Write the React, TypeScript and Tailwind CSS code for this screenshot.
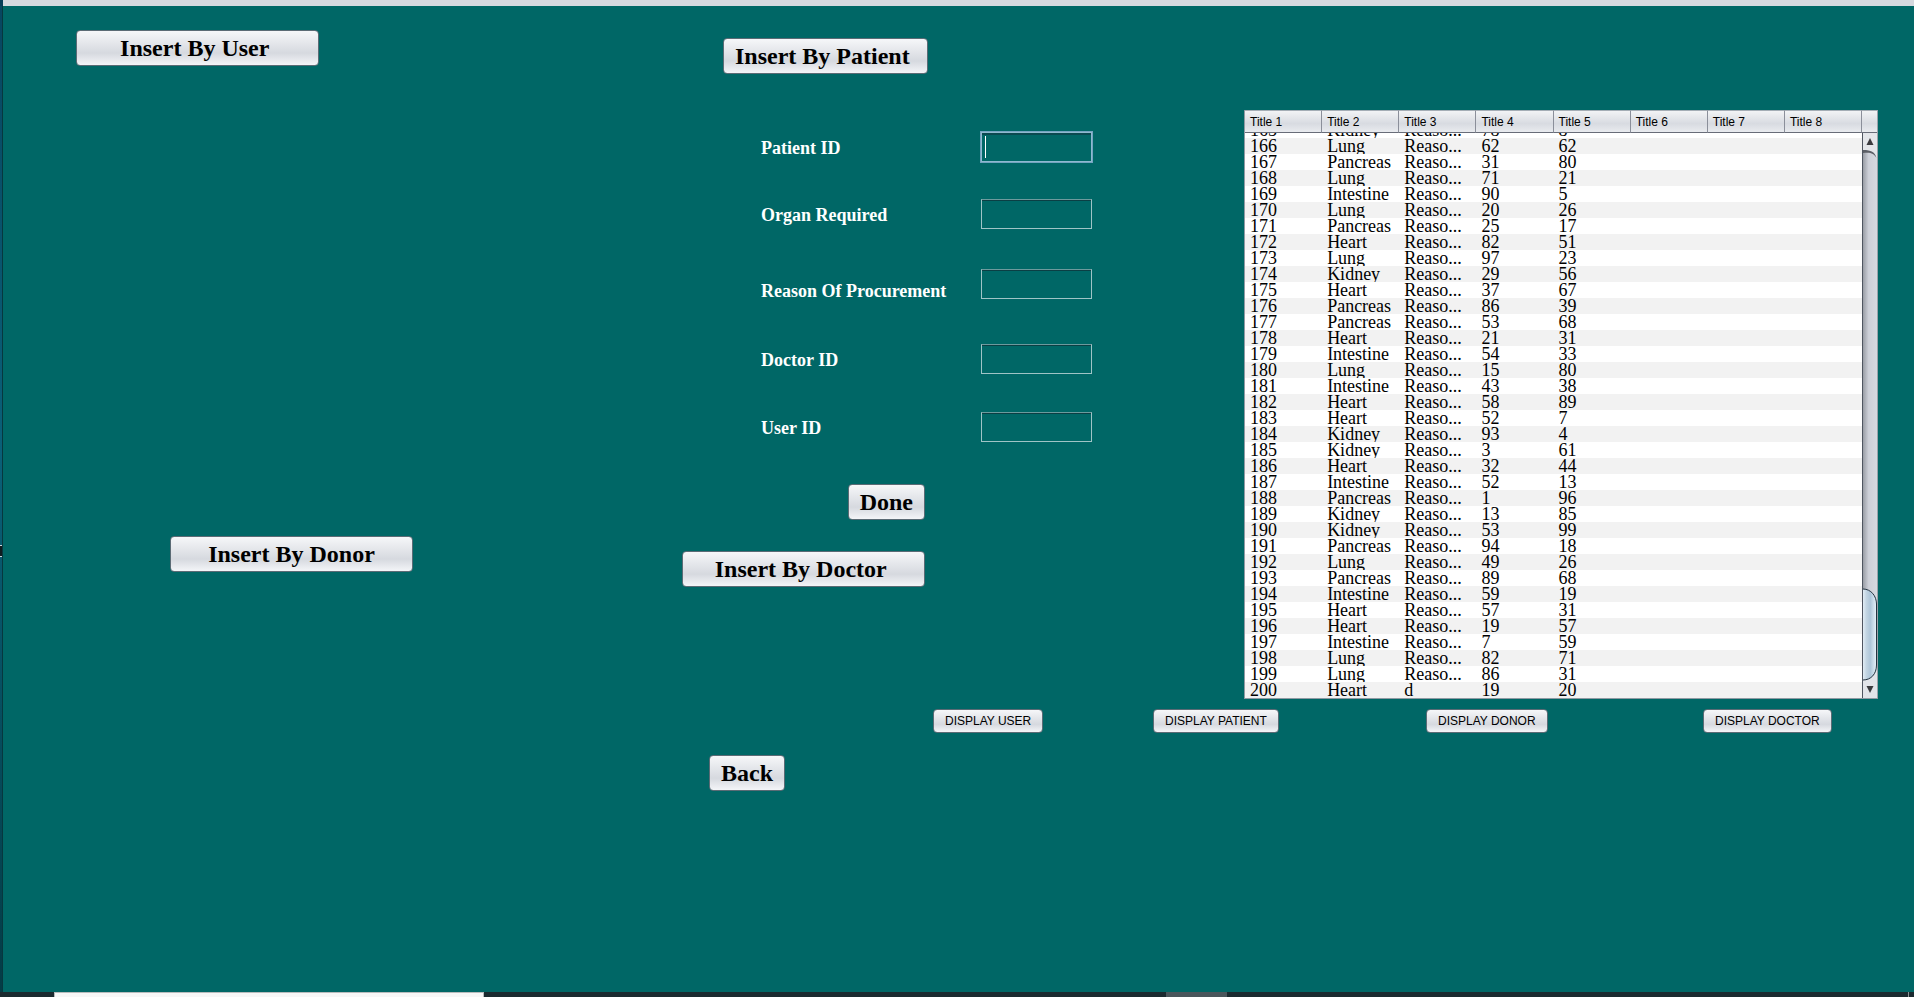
import type { ReactNode } from 'react';

const BUTTON_FACE =
  'border border-[#5b6b75] bg-linear-to-b from-[#f6f7f9] via-[#d6d9df] via-65% to-[#f4f5f8] text-black whitespace-pre';

function ActionButton({ children, className = '' }: { children: ReactNode; className?: string }) {
  return (
    <button
      type="button"
      className={`${BUTTON_FACE} h-9 shrink-0 rounded-[4px] px-[11px] text-[24px] leading-[28px] font-bold ${className}`}
    >
      {children}
    </button>
  );
}

function DisplayButton({ children }: { children: ReactNode }) {
  return (
    <button
      type="button"
      className={`${BUTTON_FACE} h-6 justify-self-start rounded-[4px] px-[11px] font-['Liberation_Sans',Arial,sans-serif] text-[12px] leading-4`}
    >
      {children}
    </button>
  );
}

const FIELDS = [
  { id: 'patient-id', label: 'Patient ID', row: 'pt-0', text: 'pt-[7px]' },
  { id: 'organ', label: 'Organ Required', row: 'pt-[37px]', text: 'pt-[7px]' },
  { id: 'reason', label: 'Reason Of Procurement', row: 'pt-[40px]', text: 'pt-[13px]' },
  { id: 'doctor-id', label: 'Doctor ID', row: 'pt-[44px]', text: 'pt-[7px]' },
  { id: 'user-id', label: 'User ID', row: 'pt-[38px]', text: 'pt-[7px]' },
];

function PatientForm() {
  return (
    <form className="mt-[58px] ml-[79px] flex flex-col">
      {FIELDS.map((f, i) => (
        <div key={f.id} className={`flex items-start ${f.row}`}>
          <label
            htmlFor={f.id}
            className={`w-[220px] text-[18px] leading-[18px] font-bold text-white ${f.text}`}
          >
            {f.label}
          </label>
          <div className="relative">
            <input
              id={f.id}
              type="text"
              className={`block h-[30px] w-[111px] border bg-transparent px-1 text-[18px] text-white outline-none ${
                i === 0
                  ? 'border-[#8fb9cf] shadow-[0_0_0_1px_#73a4c0,inset_0_2px_0_#0a4a50]'
                  : 'border-[#9fc4c6] border-t-[#6d9a9d] shadow-[inset_0_1px_0_#0b3f44]'
              }`}
            />
            {i === 0 && <span className="absolute top-1 left-1 h-[22px] w-px bg-white" />}
          </div>
        </div>
      ))}
    </form>
  );
}

const TITLES = ['Title 1', 'Title 2', 'Title 3', 'Title 4', 'Title 5', 'Title 6', 'Title 7', 'Title 8'];

const R = 'Reaso...';
const ROWS: [number, string, string, number, number][] = [
  [165, 'Kidney', R, 78, 8],
  [166, 'Lung', R, 62, 62],
  [167, 'Pancreas', R, 31, 80],
  [168, 'Lung', R, 71, 21],
  [169, 'Intestine', R, 90, 5],
  [170, 'Lung', R, 20, 26],
  [171, 'Pancreas', R, 25, 17],
  [172, 'Heart', R, 82, 51],
  [173, 'Lung', R, 97, 23],
  [174, 'Kidney', R, 29, 56],
  [175, 'Heart', R, 37, 67],
  [176, 'Pancreas', R, 86, 39],
  [177, 'Pancreas', R, 53, 68],
  [178, 'Heart', R, 21, 31],
  [179, 'Intestine', R, 54, 33],
  [180, 'Lung', R, 15, 80],
  [181, 'Intestine', R, 43, 38],
  [182, 'Heart', R, 58, 89],
  [183, 'Heart', R, 52, 7],
  [184, 'Kidney', R, 93, 4],
  [185, 'Kidney', R, 3, 61],
  [186, 'Heart', R, 32, 44],
  [187, 'Intestine', R, 52, 13],
  [188, 'Pancreas', R, 1, 96],
  [189, 'Kidney', R, 13, 85],
  [190, 'Kidney', R, 53, 99],
  [191, 'Pancreas', R, 94, 18],
  [192, 'Lung', R, 49, 26],
  [193, 'Pancreas', R, 89, 68],
  [194, 'Intestine', R, 59, 19],
  [195, 'Heart', R, 57, 31],
  [196, 'Heart', R, 19, 57],
  [197, 'Intestine', R, 7, 59],
  [198, 'Lung', R, 82, 71],
  [199, 'Lung', R, 86, 31],
  [200, 'Heart', 'd', 19, 20],
];

const HEADER_FACE =
  'h-[23px] border-t border-b border-t-[#a4adb5] border-b-[#686c78] bg-linear-to-b from-[#f2f3f5] via-[#d8dbe1] via-60% to-[#e9ebef]';

function ScrollBar() {
  return (
    <div className="flex flex-col border-r border-[#9aa3ab] bg-[#d6d9df]">
      <div className={HEADER_FACE} />
      <div className="flex flex-1 flex-col border-l border-[#4f5560] bg-linear-to-r from-[#9a9ea6] via-[#cdd0d8] via-40% to-[#d6d9df]">
        <svg viewBox="0 0 14 26" className="h-[26px] w-full" preserveAspectRatio="none" aria-hidden="true">
          <path d="M0 0H14V26C13 20 9 17 0 17Z" fill="#e4e6ea" />
          <path d="M0 17C8 17 12 19 13.500 25C11 20 7 19 0 20Z" fill="#5c5f66" />
          <path d="M3.500 12L7 5L10.500 12Z" fill="#3a3a3e" />
        </svg>
        <div className="flex-1" />
        <svg viewBox="0 0 14 110" className="h-[110px] w-full" preserveAspectRatio="none" aria-hidden="true">
          <defs>
            <linearGradient id="thumb" x1="0" x2="1">
              <stop offset="0" stopColor="#e2edf5" />
              <stop offset="0.25" stopColor="#c3d5e3" />
              <stop offset="0.55" stopColor="#aec6d9" />
              <stop offset="1" stopColor="#e6f2fa" />
            </linearGradient>
          </defs>
          <path d="M0 92C8 92 13 86 14 80V110H0Z" fill="#e2e4e9" />
          <path d="M0 1C8 1 13.500 8 13.500 16V77C13.500 86 8 92 0 92Z" fill="url(#thumb)" />
          <path d="M0 1C8 1 13.500 8 13.500 16V77C13.500 86 8 92 0 92" fill="none" stroke="#22323f" />
          <path d="M3.500 98H10.500L7 105Z" fill="#3a3a3e" />
        </svg>
      </div>
    </div>
  );
}

function RecordsTable() {
  return (
    <div className="grid grid-cols-[1fr_16px] border-b border-l border-[#8f9aa3] bg-white">
      <table className="w-full table-fixed border-collapse text-left text-black">
        <thead>
          <tr>
            {TITLES.map((t) => (
              <th
                key={t}
                className="p-0 font-['Liberation_Sans',Arial,sans-serif] text-[12px] font-normal"
              >
                <div className={`${HEADER_FACE} border-r border-r-[#8b8f9a] pl-[5px] leading-[23px]`}>{t}</div>
              </th>
            ))}
          </tr>
        </thead>
        <tbody>
          {ROWS.map((row, r) => (
            <tr key={row[0]} className="even:bg-[#f2f2f2]">
              {TITLES.map((t, c) => (
                <td key={t} className="p-0">
                  <div
                    className={`flex items-end overflow-hidden pl-[5px] text-[18px] leading-4 whitespace-nowrap ${
                      r === 0 ? 'h-[5px]' : 'h-4'
                    }`}
                  >
                    {row[c]}
                  </div>
                </td>
              ))}
            </tr>
          ))}
        </tbody>
      </table>
      <ScrollBar />
    </div>
  );
}

export default function App() {
  return (
    <div className="flex min-h-screen flex-col bg-[#006766] font-['Liberation_Serif','Times_New_Roman',serif]">
      <div className="flex h-[6px]">
        <div className="w-[3px] bg-[#083f58]" />
        <div className="flex-1 bg-[#d6d9df]" />
      </div>
      <div className="flex flex-1">
        <div className="w-[3px] border-r border-[#06383f] bg-linear-to-b from-[#084660] via-[#0a6078] via-45% to-[#043c46]">
          <div className="mt-[539px] h-3 border-y border-[#c9d6da] bg-[#101c20]" />
        </div>
        <main className="flex-1">
          <div className="grid grid-cols-[679fr_562fr_670fr]">
            <section className="flex flex-col items-start pt-6">
              <ActionButton className="ml-[73px] w-[243px]">{'Insert By User '}</ActionButton>
              <ActionButton className="mt-[470px] ml-[167px] w-[243px]">Insert By Donor</ActionButton>
            </section>
            <section className="flex flex-col items-start pt-8">
              <ActionButton className="ml-[41px]">{'Insert By Patient '}</ActionButton>
              <PatientForm />
              <div className="flex w-[243px] flex-col items-end gap-[31px] pt-[42px]">
                <ActionButton>Done</ActionButton>
                <ActionButton className="w-full">{'Insert By Doctor '}</ActionButton>
              </div>
            </section>
            <section className="pt-[104px] pr-9">
              <RecordsTable />
            </section>
          </div>
          <div className="mt-[10px] grid grid-cols-[220fr_273fr_277fr_211fr] pl-[930px]">
            <DisplayButton>DISPLAY USER</DisplayButton>
            <DisplayButton>DISPLAY PATIENT</DisplayButton>
            <DisplayButton>DISPLAY DONOR</DisplayButton>
            <DisplayButton>DISPLAY DOCTOR</DisplayButton>
          </div>
          <div className="mt-[22px] pl-[706px]">
            <ActionButton>Back</ActionButton>
          </div>
        </main>
      </div>
      <footer className="flex h-[5px] bg-[#1b2a2f]">
        <div className="ml-[54px] w-[430px] border border-b-0 border-[#b9bcbd] bg-[#f7f7f7]" />
        <div className="ml-[682px] w-[61px] bg-[#4a565b]" />
        <div className="mr-[5px] ml-auto w-px bg-[#8b9496]" />
      </footer>
    </div>
  );
}
